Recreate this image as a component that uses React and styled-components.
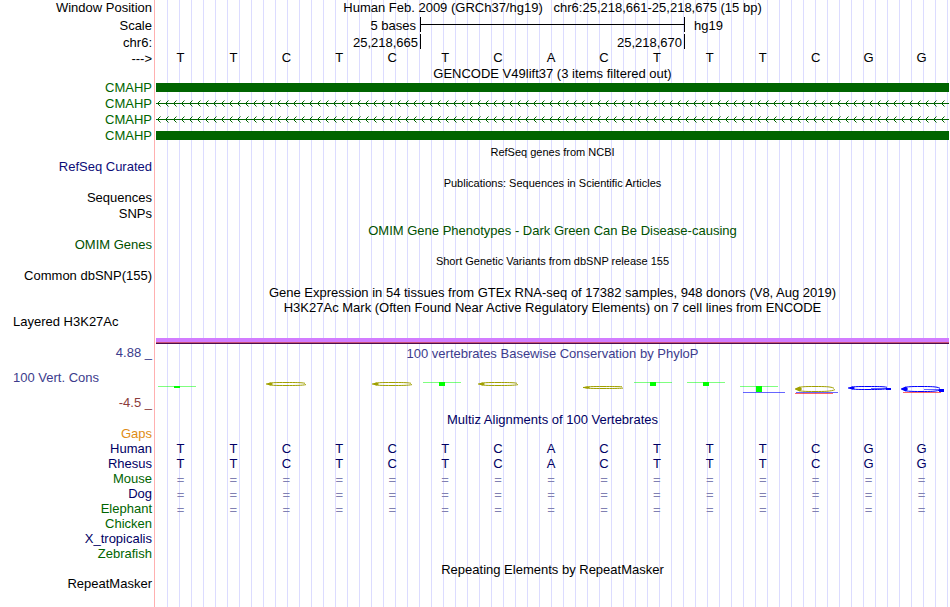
import React from 'react';
import styled, { createGlobalStyle } from 'styled-components';

const colors = {
	black: '#000000',
	gene: '#006400',
	refseq: '#0c0c78',
	omim: '#005000',
	wiggle: '#3c3c8c',
	negative: '#8c3c3c',
	navy: '#000064',
	gaps: '#e08c14',
	gap: '#8080b2',
	yellow: '#a0a000',
	blue: '#0000ff',
	red: '#ff0000',
	guide: '#dcdcff',
	edge: '#ffb0b0',
};

const GlobalStyle = createGlobalStyle`
	body {
		margin: 0;
		background: #ffffff;
		font-family: 'Liberation Sans', Arial, sans-serif;
		font-size: 13px;
	}
`;

// red edge after the labels, then a guide line every 12px
const Browser = styled.main`
	min-height: 100vh;
	background: linear-gradient(${colors.edge}, ${colors.edge}) 154px 0 / 1px 100%
			no-repeat,
		linear-gradient(#ffffff, #ffffff) 0 0 / 156px 100% no-repeat,
		linear-gradient(to right, ${colors.guide} 1px, transparent 1px) 155px 0 /
			12px 100%;
`;

const Row = styled.div`
	display: grid;
	grid-template-columns: 152px 1fr;
	column-gap: 3px;
	height: ${(props) => props.$height || 15}px;
	line-height: ${(props) => props.$line || props.$height || 15}px;
	color: ${(props) => props.$color || colors.black};
	white-space: pre;
`;

const Label = styled.div`
	grid-column: 1;
	text-align: ${(props) => (props.$left ? 'left' : 'right')};
	padding-left: ${(props) => (props.$left ? 13 : 0)}px;
`;

const Track = styled.div`
	grid-column: 2;
	min-width: 0;
`;

const Title = styled(Track)`
	text-align: center;
	font-size: ${(props) => (props.$small ? 11 : 13)}px;
`;

const Bases = styled(Track)`
	display: grid;
	grid-template-columns: repeat(15, 1fr);
	margin: 0 2px 0 -1px;
	text-align: center;
	line-height: ${(props) => props.$line || 15}px;
	color: ${(props) => props.$color || 'inherit'};
`;

const Ruler = styled(Track)`
	display: grid;
	grid-template-columns: repeat(3, 1fr);
`;

const RulerText = styled.div`
	text-align: right;
	padding-right: ${(props) => props.$gap || 2}px;
`;

const RulerSpan = styled.div`
	height: 15px;
	border: solid ${colors.black};
	border-width: 0 1px;
	background: linear-gradient(${colors.black}, ${colors.black}) 0 7px / 100% 1px
		no-repeat;
`;

const RulerTick = styled(RulerText)`
	height: 15px;
	border: solid ${colors.black};
	border-width: 0 1px;
`;

const Assembly = styled.div`
	padding-left: 9px;
`;

const Exon = styled(Track)`
	height: 9px;
	margin: 3px 1px 0;
	background: ${colors.gene};
`;

const Intron = styled.svg`
	grid-column: 2;
	width: calc(100% - 1px);
	height: 16px;
`;

const Defs = styled.svg`
	display: block;
	width: 0;
	height: 0;
`;

const Signal = styled(Track)`
	height: 4px;
	margin: 8px 1px 0;
	padding-bottom: 1px;
	background: #d27cff;
	border-bottom: 1px solid #4c0c4c;
	box-shadow: inset 0 -1px 0 #c85078;
`;

const Axis = styled.div`
	display: flex;
	flex-direction: column;
	justify-content: space-between;
	line-height: 18px;
`;

const Limit = styled.div`
	text-align: right;
	color: ${(props) => props.$color};
`;

const Wiggle = styled.div`
	line-height: 20px;
	text-align: center;
`;

const Logo = styled.svg`
	display: block;
	width: 100%;
	height: 16px;
	margin-top: 16px;
`;

const sequence = 'TTCTCTCACTTTCGG'.split('');

const species = [
	{ name: 'Human', color: colors.navy, aligned: true },
	{ name: 'Rhesus', color: colors.navy, aligned: true },
	{ name: 'Mouse', color: colors.gene, gap: true },
	{ name: 'Dog', color: colors.navy, gap: true },
	{ name: 'Elephant', color: colors.gene, gap: true },
	{ name: 'Chicken', color: colors.gene },
	{ name: 'X_tropicalis', color: colors.navy },
	{ name: 'Zebrafish', color: colors.gene },
];

const Sequence = ({ gap, ...props }) => (
	<Bases {...props}>
		{sequence.map((base, i) => (
			<span key={i}>{gap ? '=' : base}</span>
		))}
	</Bases>
);

const LabelRow = ({ children, left, ...props }) => (
	<Row $line={13} {...props}>
		<Label $left={left}>{children}</Label>
	</Row>
);

const TitleRow = ({ children, small, ...props }) => (
	<Row {...props}>
		<Title $small={small}>{children}</Title>
	</Row>
);

const StrandPattern = () => (
	<Defs>
		<defs>
			<pattern
				id='strand'
				x='1'
				width='8'
				height='16'
				patternUnits='userSpaceOnUse'
			>
				<g fill={colors.gene}>
					<rect x='1' y='7' width='1' height='1' />
					<rect x='2' y='6' width='1' height='3' />
					<rect x='3' y='5' width='1' height='1' />
					<rect x='3' y='9' width='1' height='1' />
				</g>
				<g fill={colors.gene} opacity='0.5'>
					<rect x='4' y='4' width='1' height='1' />
					<rect x='4' y='10' width='1' height='1' />
				</g>
			</pattern>
		</defs>
	</Defs>
);

const GeneRow = ({ intron }) => (
	<Row $height={16} $color={colors.gene}>
		<Label>CMAHP</Label>
		{intron ? (
			<Intron shapeRendering='crispEdges'>
				<rect x='1' y='7' width='100%' height='1' fill={colors.gene} />
				<rect x='1' y='0' width='100%' height='16' fill='url(#strand)' />
			</Intron>
		) : (
			<Exon />
		)}
	</Row>
);

const Stem = ({ x, y, height }) => (
	<g fill='#00ff00'>
		<rect x={x - 19} y={y} width='38' height='1' opacity='0.5' />
		<rect x={x - 3} y={y} width='6' height={height} />
	</g>
);

const Hairline = ({ x, y, width, color }) => (
	<rect x={x} y={y} width={width} height='1' fill={color} opacity='0.6' />
);

// flattened ring, open to the right, heavier at its left end
const Ring = ({ x, y, height, color, bar }) => {
	const mid = y + height / 2;
	const top = y + 0.5;
	const low = y + height - 0.5;
	return (
		<g fill='none' stroke={color}>
			<path
				d={`M${x + 39} ${mid - 0.7} C${x + 36} ${top} ${x + 29} ${top} ${x + 20} ${top} C${x + 10} ${top} ${x + 3} ${top} ${x + 2} ${mid} C${x + 3} ${low} ${x + 10} ${low} ${x + 20} ${low} C${x + 29} ${low} ${x + 36} ${low} ${x + 40} ${mid + 0.6}`}
			/>
			<path
				d={`M${x} ${mid - 0.6} L${x + 5} ${y + 0.5} L${x + 7} ${mid} L${x + 5} ${y + height - 0.5} L${x} ${mid + 0.6} Z`}
				fill={color}
				stroke='none'
			/>
			{bar && (
				<g fill={color} stroke='none'>
					<rect x={x + 23} y={mid} width='20' height='1' opacity='0.6' />
					<rect x={x + 38} y={mid} width='5' height={height / 2} />
				</g>
			)}
		</g>
	);
};

const ConservationLogo = () => (
	<Logo viewBox='155 380 795 16' preserveAspectRatio='none'>
		<Stem x={177} y={386} height={2} />
		<Ring x={266} y={382} height={4} color={colors.yellow} />
		<Ring x={372} y={382} height={4} color={colors.yellow} />
		<Stem x={442} y={382} height={4} />
		<Ring x={478} y={382} height={4} color={colors.yellow} />
		<Ring x={583} y={386} height={3} color={colors.yellow} />
		<Stem x={653} y={382} height={4} />
		<Stem x={706} y={382} height={4} />
		<Stem x={759} y={386} height={6} />
		<Hairline x={743} y={392} width={42} color={colors.blue} />
		<Ring x={795} y={386} height={6} color={colors.yellow} />
		<Hairline x={796} y={392} width={42} color={colors.blue} />
		<Hairline x={795} y={393} width={38} color={colors.red} />
		<Ring x={848} y={386} height={4} color={colors.blue} bar />
		<Ring x={901} y={386} height={6} color={colors.blue} bar />
		<Hairline x={903} y={392} width={38} color={colors.red} />
	</Logo>
);

const App = () => {
	return (
		<Browser>
			<GlobalStyle />
			<StrandPattern />
			<Row $height={17} $line={15}>
				<Label>Window Position</Label>
				<Title>
					Human Feb. 2009 (GRCh37/hg19)   chr6:25,218,661-25,218,675 (15 bp)
				</Title>
			</Row>
			<Row $height={17}>
				<Label>Scale</Label>
				<Ruler>
					<RulerText $gap={4}>5 bases</RulerText>
					<RulerSpan />
					<Assembly>hg19</Assembly>
				</Ruler>
			</Row>
			<Row $height={16} $line={18}>
				<Label>chr6:</Label>
				<Ruler>
					<RulerText>25,218,665</RulerText>
					<RulerTick>25,218,670</RulerTick>
				</Ruler>
			</Row>
			<Row $height={16} $line={18}>
				<Label>---&gt;</Label>
				<Sequence $line={15} />
			</Row>
			<TitleRow $height={14} $line={16}>
				GENCODE V49lift37 (3 items filtered out)
			</TitleRow>
			<GeneRow />
			<GeneRow intron />
			<GeneRow intron />
			<GeneRow />
			<TitleRow $height={16} small>
				RefSeq genes from NCBI
			</TitleRow>
			<LabelRow $color={colors.refseq}>RefSeq Curated</LabelRow>
			<TitleRow $height={16} small>
				Publications: Sequences in Scientific Articles
			</TitleRow>
			<LabelRow>Sequences</LabelRow>
			<LabelRow $height={16} $line={16}>
				SNPs
			</LabelRow>
			<TitleRow $height={16} $line={18} $color={colors.omim}>
				OMIM Gene Phenotypes - Dark Green Can Be Disease-causing
			</TitleRow>
			<LabelRow $color={colors.omim}>OMIM Genes</LabelRow>
			<TitleRow $height={16} small>
				Short Genetic Variants from dbSNP release 155
			</TitleRow>
			<LabelRow>Common dbSNP(155)</LabelRow>
			<TitleRow $height={16} $line={18}>
				Gene Expression in 54 tissues from GTEx RNA-seq of 17382 samples, 948
				donors (V8, Aug 2019)
			</TitleRow>
			<TitleRow>
				H3K27Ac Mark (Often Found Near Active Regulatory Elements) on 7 cell
				lines from ENCODE
			</TitleRow>
			<LabelRow left>Layered H3K27Ac</LabelRow>
			<Row $height={14}>
				<Signal />
			</Row>
			<Row $height={68} $color={colors.wiggle}>
				<Axis>
					<Limit>4.88 _</Limit>
					<Label $left>100 Vert. Cons</Label>
					<Limit $color={colors.negative}>-4.5 _</Limit>
				</Axis>
				<Wiggle>
					100 vertebrates Basewise Conservation by PhyloP
					<ConservationLogo />
				</Wiggle>
			</Row>
			<TitleRow $color={colors.navy}>
				Multiz Alignments of 100 Vertebrates
			</TitleRow>
			<LabelRow $color={colors.gaps}>Gaps</LabelRow>
			{species.map(({ name, color, aligned, gap }) => (
				<Row key={name} $color={color} $line={13}>
					<Label>{name}</Label>
					{aligned && <Sequence $line={13} />}
					{gap && <Sequence gap $color={colors.gap} />}
				</Row>
			))}
			<TitleRow>Repeating Elements by RepeatMasker</TitleRow>
			<LabelRow>RepeatMasker</LabelRow>
		</Browser>
	);
};

export default App;
